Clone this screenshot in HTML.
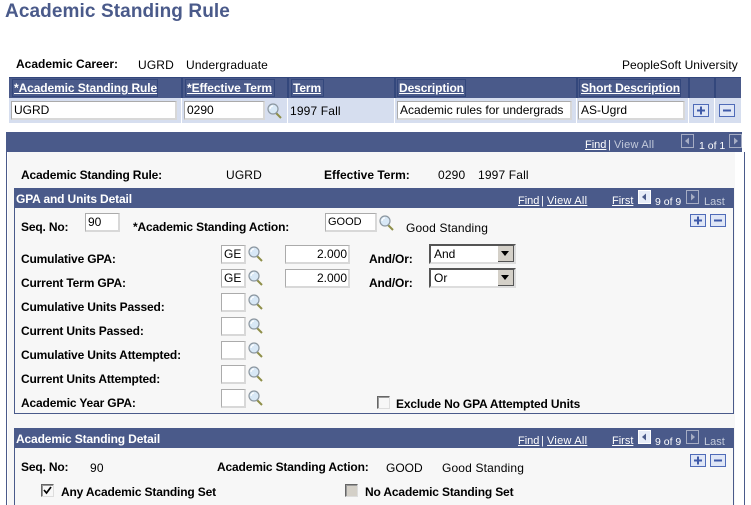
<!DOCTYPE html>
<html><head><meta charset="utf-8"><title>Academic Standing Rule</title>
<style>
html,body{margin:0;padding:0;background:#fff;width:751px;height:505px;overflow:hidden}
body{position:relative;font-family:"Liberation Sans",Arial,sans-serif;font-size:12px;color:#000}
.a,.t,.b,.h,.i,.l,.g,.n{position:absolute;white-space:nowrap}
.t{height:14px;line-height:14px;letter-spacing:.15px}
.b{height:14px;line-height:14px;font-weight:bold;letter-spacing:-.16px}
.h{font-weight:bold;color:#fff;height:14px;line-height:14px;letter-spacing:-.14px}
.l{color:#fff;height:14px;line-height:14px;text-decoration:underline;font-size:11px}
.g{color:#c3cadb;height:14px;line-height:14px;font-size:11px}
.n{color:#fff;height:14px;line-height:14px;font-size:11px}
.va{letter-spacing:.25px}
.i{box-sizing:border-box;background:#fff;border:1px solid #ababab;border-right:2px solid #d8d8d8;border-bottom:2px solid #d8d8d8;line-height:17px;padding-left:2px;height:19px}
.th{position:absolute;top:79px;height:18px;border:1px solid #33477c;line-height:17px;box-sizing:border-box;padding-left:1px;font-weight:bold;color:#fff;text-decoration:underline;white-space:nowrap;letter-spacing:-.1px}
.btn{position:absolute;box-sizing:border-box;width:16px;height:13px;border:1px solid #4f6bb8;background:#dfe6f6}
.btn svg,.m svg{display:block}
.m{position:absolute;width:15px;height:16px}
.cb{position:absolute;box-sizing:border-box;width:13px;height:13px;background:#f7f7f7;border:1px solid;border-color:#666 #ddd #ddd #666;box-shadow:inset 1px 1px 0 #999}
.nb{position:absolute;box-sizing:border-box;width:13px;height:14px;border:1px solid #a6adc4}
.sel{position:absolute;left:429px;width:87px;height:20px;box-sizing:border-box;border:2px solid #555;border-right-color:#ddd;border-bottom-color:#ddd;background:#fff;line-height:17px;padding-left:3px}
.sb{position:absolute;right:0;top:0;width:16px;height:16px;background:#d4d0c8;border-right:1px solid #555;border-bottom:1px solid #555;box-sizing:border-box}
</style></head><body>
<svg width="0" height="0" style="position:absolute"><defs>
<symbol id="mag" viewBox="0 0 15 16"><line x1="9" y1="10" x2="14" y2="15" stroke="#8f8f4a" stroke-width="2"/><circle cx="6" cy="6" r="5" fill="#d8e8f6" stroke="#8c97a0" stroke-width="1.2"/><path d="M3 6a3 3 0 0 1 3-3" fill="none" stroke="#fff" stroke-width="1.2"/></symbol>
<symbol id="plus" viewBox="0 0 14 11"><path d="M7 1.500V9.500M3 5.500H11" stroke="#3f5aa8" stroke-width="2"/></symbol>
<symbol id="minus" viewBox="0 0 14 11"><path d="M3 5.500H11" stroke="#3f5aa8" stroke-width="2"/></symbol>
</defs></svg>

<div class="a" style="left:5px;top:1px;font-size:19px;letter-spacing:.1px;font-weight:bold;color:#4a5a8a;line-height:22px">Academic Standing Rule</div>

<div class="b" style="left:16px;top:57px;letter-spacing:0">Academic Career:</div>
<div class="t" style="left:138px;top:58px">UGRD</div>
<div class="t" style="left:186px;top:58px">Undergraduate</div>
<div class="t" style="left:622px;top:58px;letter-spacing:.05px">PeopleSoft University</div>

<!-- grid -->
<div class="a" style="left:9px;top:77px;width:732px;height:21px;background:#4a5a8a;border-top:1px solid #33477c;box-sizing:border-box"></div>
<div class="a" style="left:9px;top:98px;width:732px;height:25px;background:#d6deef"></div>
<div class="a" style="left:181px;top:77px;width:2px;height:21px;background:#33477c"></div>
<div class="a" style="left:287px;top:77px;width:2px;height:21px;background:#33477c"></div>
<div class="a" style="left:394px;top:77px;width:2px;height:21px;background:#33477c"></div>
<div class="a" style="left:576px;top:77px;width:2px;height:21px;background:#33477c"></div>
<div class="a" style="left:688px;top:77px;width:2px;height:21px;background:#33477c"></div>
<div class="a" style="left:714px;top:77px;width:2px;height:21px;background:#33477c"></div>
<div class="a" style="left:181px;top:98px;width:1px;height:25px;background:#fff"></div>
<div class="a" style="left:287px;top:98px;width:1px;height:25px;background:#fff"></div>
<div class="a" style="left:394px;top:98px;width:1px;height:25px;background:#fff"></div>
<div class="a" style="left:576px;top:98px;width:1px;height:25px;background:#fff"></div>
<div class="a" style="left:688px;top:98px;width:1px;height:25px;background:#fff"></div>
<div class="a" style="left:714px;top:98px;width:1px;height:25px;background:#fff"></div>

<div class="th" style="left:12px;width:146px">*Academic Standing Rule</div>
<div class="th" style="left:185px;width:90px">*Effective Term</div>
<div class="th" style="left:291px;width:33px">Term</div>
<div class="th" style="left:397px;width:69px">Description</div>
<div class="th" style="left:579px;width:102px">Short Description</div>

<div class="i" style="left:11px;top:101px;width:166px">UGRD</div>
<div class="i" style="left:184px;top:101px;width:81px">0290</div>
<div class="m" style="left:267px;top:103px"><svg width="15" height="16"><use href="#mag"/></svg></div>
<div class="t" style="left:290px;top:104px">1997 Fall</div>
<div class="i" style="left:397px;top:101px;width:175px">Academic rules for undergrads</div>
<div class="i" style="left:578px;top:101px;width:107px">AS-Ugrd</div>
<div class="btn" style="left:693px;top:104px"><svg width="14" height="11"><use href="#plus"/></svg></div>
<div class="btn" style="left:719px;top:104px"><svg width="14" height="11"><use href="#minus"/></svg></div>

<!-- outer panel -->
<div class="a" style="left:6px;top:132px;width:736px;height:20px;background:#4a5a8a"></div>
<div class="a" style="left:6px;top:152px;width:1px;height:353px;background:#4a5a8a"></div>
<div class="a" style="left:744px;top:152px;width:1px;height:353px;background:#4a5a8a"></div>
<div class="a" style="left:8px;top:152px;width:727px;height:353px;background:#f7f7f7"></div>
<div class="l" style="left:585px;top:138px">Find</div>
<div class="n" style="left:608px;top:138px">|</div>
<div class="g va" style="left:614px;top:138px">View All</div>
<div class="nb" style="left:681px;top:134px"><svg width="11" height="12" style="display:block"><path d="M7 2.500V9.500L3 6z" fill="#a6adc4"/></svg></div>
<div class="n" style="left:699px;top:139px;font-size:10.500px">1 of 1</div>
<div class="nb" style="left:729px;top:134px"><svg width="11" height="12" style="display:block"><path d="M4 2.500V9.500L8 6z" fill="#a6adc4"/></svg></div>

<div class="b" style="left:21px;top:168px">Academic Standing Rule:</div>
<div class="t" style="left:226px;top:168px">UGRD</div>
<div class="b" style="left:324px;top:168px;letter-spacing:0">Effective Term:</div>
<div class="t" style="left:438px;top:168px">0290</div>
<div class="t" style="left:478px;top:168px">1997 Fall</div>

<!-- section 1 -->
<div class="a" style="left:14px;top:188px;width:720px;height:226px;box-sizing:border-box;border:1px solid #4a5a8a;border-top:0"></div>
<div class="a" style="left:14px;top:188px;width:720px;height:20px;background:#4a5a8a"></div>
<div class="h" style="left:16px;top:192px">GPA and Units Detail</div>
<div class="l" style="left:518px;top:194px">Find</div>
<div class="n" style="left:541px;top:194px">|</div>
<div class="l va" style="left:547px;top:194px">View All</div>
<div class="l" style="left:612px;top:194px">First</div>
<div class="nb" style="left:638px;top:190px;background:#e6ecf8;border-color:#fff"><svg width="11" height="12" style="display:block"><path d="M7 2.500V9.500L3 6z" fill="#4a5a8a"/></svg></div>
<div class="n" style="left:655px;top:195px;font-size:10.500px">9 of 9</div>
<div class="nb" style="left:686px;top:190px"><svg width="11" height="12" style="display:block"><path d="M4 2.500V9.500L8 6z" fill="#a6adc4"/></svg></div>
<div class="g" style="left:704px;top:195px">Last</div>
<div class="btn" style="left:690px;top:214px"><svg width="14" height="11"><use href="#plus"/></svg></div>
<div class="btn" style="left:710px;top:214px"><svg width="14" height="11"><use href="#minus"/></svg></div>

<div class="b" style="left:21px;top:220px">Seq. No:</div>
<div class="i" style="left:85px;top:213px;width:35px;line-height:16px">90</div>
<div class="b" style="left:133px;top:220px">*Academic Standing Action:</div>
<div class="i" style="left:325px;top:213px;width:52px;font-size:11px;line-height:16px">GOOD</div>
<div class="m" style="left:379px;top:215px"><svg width="15" height="16"><use href="#mag"/></svg></div>
<div class="t" style="left:406px;top:221px">Good Standing</div>

<div class="b" style="left:21px;top:252px">Cumulative GPA:</div>
<div class="i" style="left:221px;top:245px;width:25px">GE</div>
<div class="m" style="left:248px;top:246px"><svg width="15" height="16"><use href="#mag"/></svg></div>
<div class="i" style="left:285px;top:245px;width:65px;text-align:right;padding-right:1px">2.000</div>
<div class="b" style="left:369px;top:252px">And/Or:</div>
<div class="sel" style="top:244px">And<div class="sb"><svg width="14" height="14"><path d="M3 5H11L7 10z"/></svg></div></div>

<div class="b" style="left:21px;top:276px">Current Term GPA:</div>
<div class="i" style="left:221px;top:269px;width:25px">GE</div>
<div class="m" style="left:248px;top:270px"><svg width="15" height="16"><use href="#mag"/></svg></div>
<div class="i" style="left:285px;top:269px;width:65px;text-align:right;padding-right:1px">2.000</div>
<div class="b" style="left:369px;top:276px">And/Or:</div>
<div class="sel" style="top:268px">Or<div class="sb"><svg width="14" height="14"><path d="M3 5H11L7 10z"/></svg></div></div>

<div class="b" style="left:21px;top:300px">Cumulative Units Passed:</div>
<div class="i" style="left:221px;top:293px;width:25px"></div>
<div class="m" style="left:248px;top:294px"><svg width="15" height="16"><use href="#mag"/></svg></div>
<div class="b" style="left:21px;top:324px">Current Units Passed:</div>
<div class="i" style="left:221px;top:317px;width:25px"></div>
<div class="m" style="left:248px;top:318px"><svg width="15" height="16"><use href="#mag"/></svg></div>
<div class="b" style="left:21px;top:348px">Cumulative Units Attempted:</div>
<div class="i" style="left:221px;top:341px;width:25px"></div>
<div class="m" style="left:248px;top:342px"><svg width="15" height="16"><use href="#mag"/></svg></div>
<div class="b" style="left:21px;top:372px">Current Units Attempted:</div>
<div class="i" style="left:221px;top:365px;width:25px"></div>
<div class="m" style="left:248px;top:366px"><svg width="15" height="16"><use href="#mag"/></svg></div>
<div class="b" style="left:21px;top:396px">Academic Year GPA:</div>
<div class="i" style="left:221px;top:389px;width:25px"></div>
<div class="m" style="left:248px;top:390px"><svg width="15" height="16"><use href="#mag"/></svg></div>
<div class="cb" style="left:377px;top:396px"></div>
<div class="b" style="left:396px;top:397px">Exclude No GPA Attempted Units</div>

<!-- section 2 -->
<div class="a" style="left:14px;top:428px;width:720px;height:77px;box-sizing:border-box;border-left:1px solid #4a5a8a;border-right:1px solid #4a5a8a"></div>
<div class="a" style="left:14px;top:428px;width:720px;height:20px;background:#4a5a8a"></div>
<div class="h" style="left:16px;top:432px">Academic Standing Detail</div>
<div class="l" style="left:518px;top:434px">Find</div>
<div class="n" style="left:541px;top:434px">|</div>
<div class="l va" style="left:547px;top:434px">View All</div>
<div class="l" style="left:612px;top:434px">First</div>
<div class="nb" style="left:638px;top:430px;background:#e6ecf8;border-color:#fff"><svg width="11" height="12" style="display:block"><path d="M7 2.500V9.500L3 6z" fill="#4a5a8a"/></svg></div>
<div class="n" style="left:655px;top:435px;font-size:10.500px">9 of 9</div>
<div class="nb" style="left:686px;top:430px"><svg width="11" height="12" style="display:block"><path d="M4 2.500V9.500L8 6z" fill="#a6adc4"/></svg></div>
<div class="g" style="left:704px;top:435px">Last</div>
<div class="btn" style="left:690px;top:454px"><svg width="14" height="11"><use href="#plus"/></svg></div>
<div class="btn" style="left:710px;top:454px"><svg width="14" height="11"><use href="#minus"/></svg></div>

<div class="b" style="left:21px;top:460px">Seq. No:</div>
<div class="t" style="left:90px;top:461px">90</div>
<div class="b" style="left:217px;top:460px">Academic Standing Action:</div>
<div class="t" style="left:386px;top:461px;letter-spacing:0">GOOD</div>
<div class="t" style="left:442px;top:461px">Good Standing</div>
<div class="cb" style="left:41px;top:484px"><svg width="11" height="11" style="display:block"><path d="M2 5L4.500 8L9 2" fill="none" stroke="#000" stroke-width="1.700"/></svg></div>
<div class="b" style="left:61px;top:485px">Any Academic Standing Set</div>
<div class="cb" style="left:345px;top:484px;background:#d4d0c8"></div>
<div class="b" style="left:365px;top:485px">No Academic Standing Set</div>
</body></html>
